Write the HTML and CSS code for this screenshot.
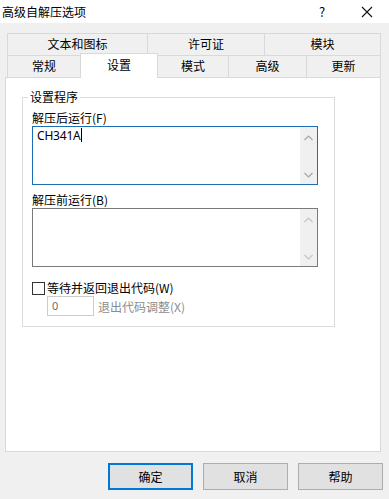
FILE: index.html
```html
<!DOCTYPE html>
<html lang="zh-CN">
<head>
    <meta charset="UTF-8">
    <title>高级自解压选项</title>
    <link rel="stylesheet" href="styles.css">
</head>
<body>
    <div class="dialog">
        <div class="titlebar">
            <span class="title">高级自解压选项</span>
            <span class="help-btn">?</span>
            <span class="close-btn">
                <svg width="12" height="12" viewBox="0 0 12 12">
                    <path d="M1 1 L11 11 M11 1 L1 11" stroke="#111" stroke-width="1.1" fill="none"/>
                </svg>
            </span>
        </div>

        <div class="body">
            <div class="tabs">
                <div class="tab-row">
                    <div class="tab w140">文本和图标</div>
                    <div class="tab w117">许可证</div>
                    <div class="tab last">模块</div>
                </div>
                <div class="tab-row">
                    <div class="tab w73">常规</div>
                    <div class="tab w78 active">设置</div>
                    <div class="tab w70">模式</div>
                    <div class="tab w78">高级</div>
                    <div class="tab last">更新</div>
                </div>
            </div>

            <div class="panel">
                <fieldset class="group">
                    <legend>设置程序</legend>

                    <div class="label">解压后运行(F)</div>
                    <div class="textbox focused">
                        <div class="textbox-text">CH341A<span class="caret"></span></div>
                        <div class="scrollbar">
                            <svg width="9" height="6" viewBox="0 0 9 6"><path d="M0.5 5 L4.5 1 L8.5 5" stroke="#a6a6a6" stroke-width="1.2" fill="none"/></svg>
                            <svg width="9" height="6" viewBox="0 0 9 6"><path d="M0.5 1 L4.5 5 L8.5 1" stroke="#a6a6a6" stroke-width="1.2" fill="none"/></svg>
                        </div>
                    </div>

                    <div class="label second">解压前运行(B)</div>
                    <div class="textbox">
                        <div class="textbox-text"></div>
                        <div class="scrollbar">
                            <svg width="9" height="6" viewBox="0 0 9 6"><path d="M0.5 5 L4.5 1 L8.5 5" stroke="#c4c4c4" stroke-width="1.2" fill="none"/></svg>
                            <svg width="9" height="6" viewBox="0 0 9 6"><path d="M0.5 1 L4.5 5 L8.5 1" stroke="#c4c4c4" stroke-width="1.2" fill="none"/></svg>
                        </div>
                    </div>

                    <div class="check-row">
                        <span class="checkbox"></span>
                        <span>等待并返回退出代码(W)</span>
                    </div>

                    <div class="exit-row">
                        <div class="num-input">0</div>
                        <span class="disabled-label">退出代码调整(X)</span>
                    </div>
                </fieldset>
            </div>

            <div class="buttons">
                <div class="btn default">确定</div>
                <div class="btn">取消</div>
                <div class="btn">帮助</div>
            </div>
        </div>
    </div>
</body>
</html>
```

FILE: styles.css
```css
* {
    margin: 0;
    padding: 0;
    box-sizing: border-box;
}

body {
    font-family: "Noto Sans CJK SC", "Noto Sans", sans-serif;
    font-size: 12px;
    color: #000;
    background: #f0f0f0;
    width: 389px;
    height: 499px;
    overflow: hidden;
}

.dialog {
    width: 389px;
    height: 499px;
    background: #f0f0f0;
}

/* title bar */
.titlebar {
    height: 23px;
    background: #fff;
    display: flex;
    align-items: center;
    padding-left: 2px;
    line-height: 22px;
}

.title {
    flex: 1;
}

.help-btn {
    width: 12px;
    margin-right: 33px;
    font-size: 13px;
    text-align: center;
}

.close-btn {
    width: 12px;
    height: 12px;
    margin-right: 16px;
    display: flex;
}

.body {
    padding: 10px 8px 0 5px;
}

/* tabs */
.tabs {
    margin: 0 0 0 2px;
    width: 374px;
}

.tab-row {
    display: flex;
    height: 22px;
}

.tab {
    border-top: 1px solid #d9d9d9;
    border-left: 1px solid #d9d9d9;
    background: #f0f0f0;
    text-align: center;
    line-height: 20px;
}

.tab.last {
    flex: 1;
    border-right: 1px solid #d9d9d9;
}

.tab.active {
    background: #fff;
    margin-top: -2px;
    margin-bottom: -1px;
    border-right: 1px solid #d9d9d9;
    position: relative;
    z-index: 1;
    line-height: 22px;
}

.tab.active + .tab {
    border-left: none;
}

.w140 { width: 140px; }
.w117 { width: 117px; }
.w73 { width: 73px; }
.w78 { width: 78px; }
.w70 { width: 70px; }

/* panel */
.panel {
    width: 376px;
    height: 375px;
    background: #fff;
    border: 1px solid #d9d9d9;
    padding: 11px 0 0 16px;
}

.group {
    width: 313px;
    border: 1px solid #dcdcdc;
    padding: 5px 0 10px 9px;
}

.group legend {
    margin-left: -4px;
    padding: 0 2px;
    line-height: 16px;
}

.label {
    line-height: 16px;
}

.label.second {
    margin-top: 7px;
}

.textbox {
    width: 286px;
    height: 59px;
    border: 1px solid #7a7a7a;
    display: flex;
    background: #fff;
}

.textbox.focused {
    border-color: #1c6eb5;
}

.textbox-text {
    flex: 1;
    padding: 1px 4px;
    line-height: 16px;
    font-family: "Noto Sans", "Noto Sans CJK SC", sans-serif;
    letter-spacing: -0.2px;
}

.caret {
    display: inline-block;
    width: 1px;
    height: 14px;
    background: #000;
    vertical-align: -2px;
}

.scrollbar {
    width: 17px;
    background: #f0f0f0;
    display: flex;
    flex-direction: column;
    justify-content: space-between;
    align-items: center;
    padding: 8px 0 6px;
}

.check-row {
    margin-top: 13px;
    display: flex;
    align-items: center;
    line-height: 16px;
}

.checkbox {
    width: 13px;
    height: 13px;
    border: 1px solid #333;
    background: #fff;
    margin-right: 2px;
}

.exit-row {
    display: flex;
    align-items: center;
    margin-left: 15px;
}

.num-input {
    width: 47px;
    height: 20px;
    border: 1px solid #cccccc;
    color: #6d6d6d;
    padding-left: 4px;
    line-height: 18px;
    font-family: "Noto Sans", sans-serif;
    font-size: 11px;
    margin-right: 4px;
}

.disabled-label {
    color: #8c8c8c;
}

/* buttons */
.buttons {
    display: flex;
    justify-content: flex-end;
    gap: 10px;
    margin-top: 11px;
    margin-right: -2px;
}

.btn {
    width: 85px;
    height: 27px;
    background: #e1e1e1;
    border: 1px solid #adadad;
    text-align: center;
    line-height: 25px;
}

.btn.default {
    border: 2px solid #0078d7;
    line-height: 23px;
}
```
